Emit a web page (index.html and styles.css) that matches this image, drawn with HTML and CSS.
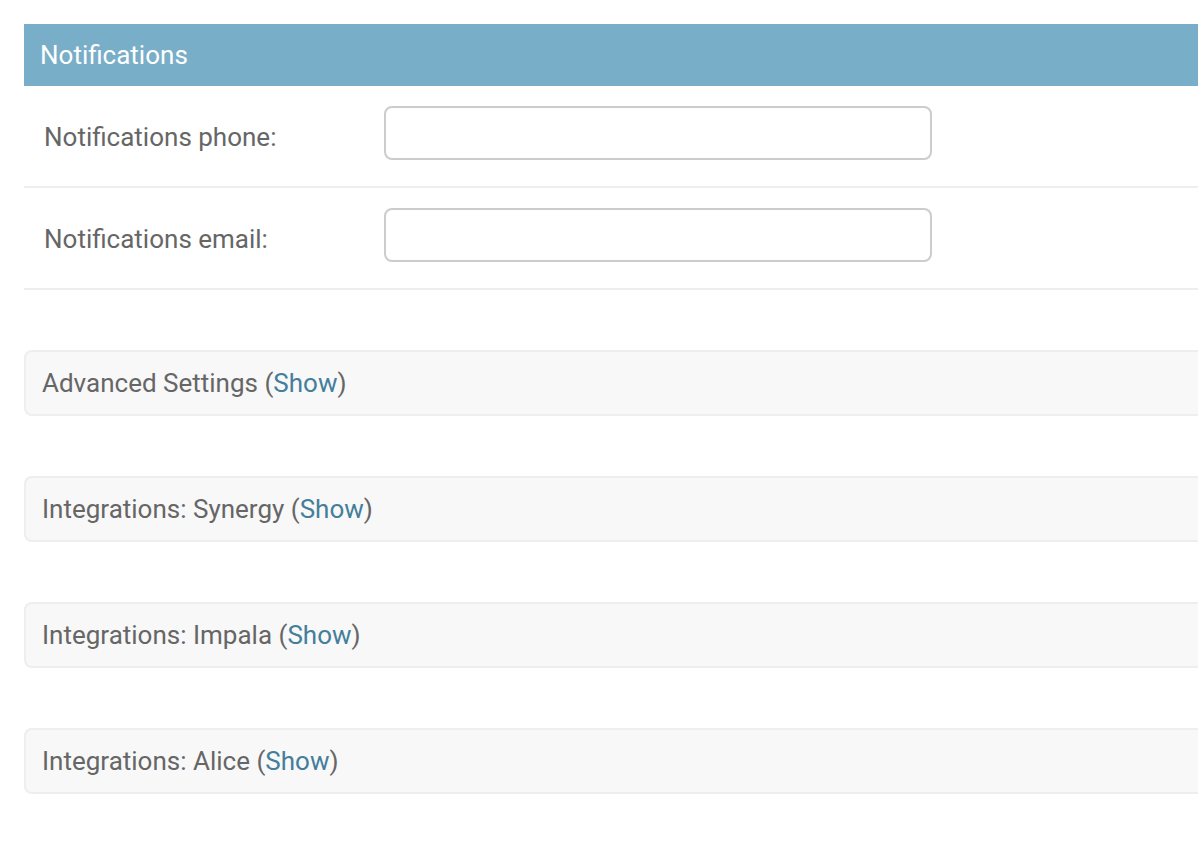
FILE: index.html
```html
<!DOCTYPE html>
<html lang="en">
<head>
<meta charset="utf-8">
<title>Notifications</title>
<link rel="stylesheet" href="styles.css">
</head>
<body>
<div class="page">
  <fieldset class="module">
    <h2 class="module-title">Notifications</h2>
    <div class="form-row">
      <label class="field-label" for="phone">Notifications phone:</label>
      <input class="text-input" id="phone" type="text">
    </div>
    <div class="form-row">
      <label class="field-label" for="email">Notifications email:</label>
      <input class="text-input" id="email" type="text">
    </div>
  </fieldset>

  <fieldset class="module collapsed">
    <h2 class="collapsed-title">Advanced Settings (<a class="toggle" href="#">Show</a>)</h2>
  </fieldset>
  <fieldset class="module collapsed">
    <h2 class="collapsed-title">Integrations: Synergy (<a class="toggle" href="#">Show</a>)</h2>
  </fieldset>
  <fieldset class="module collapsed">
    <h2 class="collapsed-title">Integrations: Impala (<a class="toggle" href="#">Show</a>)</h2>
  </fieldset>
  <fieldset class="module collapsed">
    <h2 class="collapsed-title">Integrations: Alice (<a class="toggle" href="#">Show</a>)</h2>
  </fieldset>
</div>
</body>
</html>
```

FILE: styles.css
```css
html, body {
  margin: 0;
  padding: 0;
  background: #fff;
}

body {
  font-family: Roboto, "Liberation Sans", sans-serif;
  font-size: 26px;
  color: #666;
}

.page {
  padding: 24px 0 0 24px;
  display: flex;
  flex-direction: column;
  gap: 60px;
}

.module {
  margin: 0;
  padding: 0;
  border: 0;
  min-width: 0;
}

.module-title {
  margin: 0;
  padding: 16px;
  font-size: 26px;
  line-height: 30px;
  font-weight: 400;
  color: #fff;
  background: #79aec8;
}

.form-row {
  display: flex;
  align-items: flex-start;
  padding: 20px 20px 26px;
  border-bottom: 2px solid #eee;
}

.field-label {
  flex: 0 0 340px;
  padding-top: 16px;
  line-height: 30px;
  color: #666;
}

.text-input {
  box-sizing: border-box;
  width: 548px;
  height: 54px;
  margin: 0;
  border: 2px solid #ccc;
  border-radius: 8px;
  background: #fff;
  font: inherit;
  padding: 10px 12px;
}

.collapsed {
  border: 2px solid #eee;
  border-right: 0;
  border-radius: 8px 0 0 8px;
  background: #f8f8f8;
}

.collapsed-title {
  margin: 0;
  padding: 16px;
  font-size: 26px;
  line-height: 30px;
  font-weight: 400;
  color: #666;
}

.toggle {
  color: #447e9b;
  text-decoration: none;
}
```
